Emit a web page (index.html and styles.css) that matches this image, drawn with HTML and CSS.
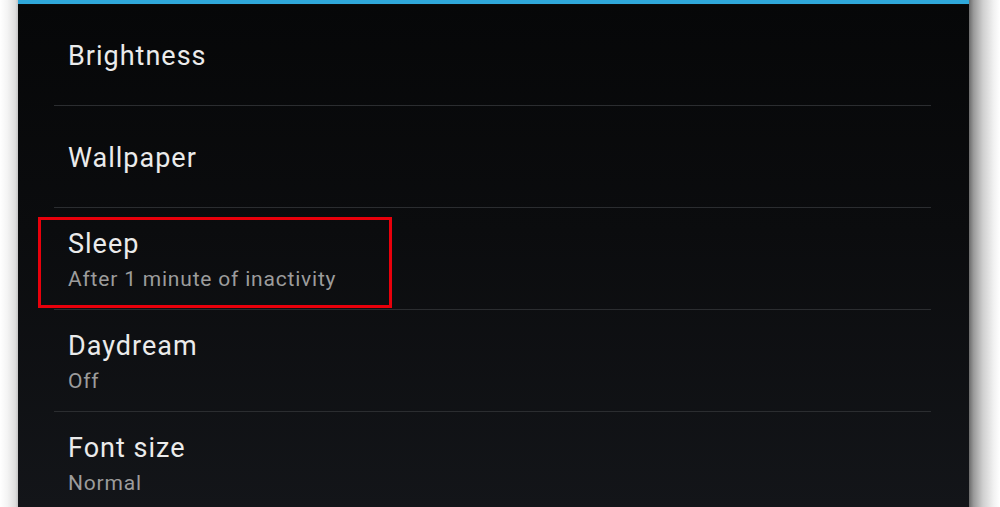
FILE: index.html
```html
<!DOCTYPE html>
<html lang="en">
<head>
    <meta charset="UTF-8">
    <meta name="viewport" content="width=device-width, initial-scale=1.0">
    <title>Display Settings</title>
    <link rel="stylesheet" href="styles.css">
</head>
<body>
    <div class="frame">
        <div class="edge-left"></div>
        <div class="screen">
            <ul class="settings">
                <li class="item">
                    <span class="title">Brightness</span>
                </li>
                <li class="item">
                    <span class="title">Wallpaper</span>
                </li>
                <li class="item highlighted">
                    <span class="title">Sleep</span>
                    <span class="summary">After 1 minute of inactivity</span>
                    <div class="callout"></div>
                </li>
                <li class="item">
                    <span class="title">Daydream</span>
                    <span class="summary">Off</span>
                </li>
                <li class="item">
                    <span class="title">Font size</span>
                    <span class="summary">Normal</span>
                </li>
            </ul>
        </div>
        <div class="edge-right"></div>
    </div>
</body>
</html>
```

FILE: styles.css
```css
html, body {
    margin: 0;
    padding: 0;
    height: 100%;
    overflow: hidden;
    background: #ffffff;
}
.frame {
    display: flex;
    height: 507px;
}
.edge-left {
    width: 18px;
    background: linear-gradient(to right, #ffffff 0%, #f4f4f4 40%, #dedede 85%, #c4c4c4 100%);
}
.edge-right {
    flex: 1;
    background: linear-gradient(to right, #6a6a6a 0%, #9a9a9a 15%, #cfcfcf 45%, #f2f2f2 80%, #ffffff 100%);
}
.screen {
    width: 951px;
    border-top: 4px solid #2fa8da;
    box-shadow: inset 0 1px 0 #0a0b0c;
    background: linear-gradient(to bottom, #060708 0%, #0b0c0e 45%, #131519 100%);
    font-family: Roboto, "Noto Sans", sans-serif;
}
.settings {
    list-style: none;
    margin: 0;
    padding: 0;
}
.item {
    position: relative;
    box-sizing: border-box;
    height: 102px;
    margin: 0 38px 0 36px;
    padding: 3px 14px 0;
    border-bottom: 1px solid #2b2d30;
    display: flex;
    flex-direction: column;
    justify-content: center;
}
.title {
    color: #ebebeb;
    font-size: 27px;
    letter-spacing: 1px;
    line-height: 34px;
}
.summary {
    color: #9c9c9c;
    font-size: 21px;
    letter-spacing: 0.8px;
    line-height: 28px;
    margin-top: 4px;
}
.callout {
    position: absolute;
    left: -16px;
    top: 9px;
    width: 348px;
    height: 85px;
    border: 3px solid #e8000b;
}
```
